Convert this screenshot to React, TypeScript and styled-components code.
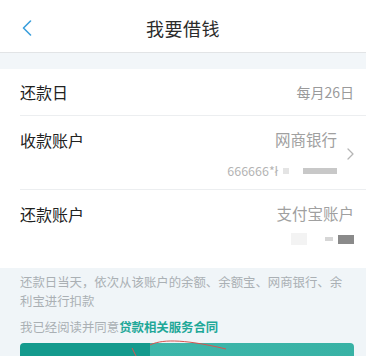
import React from "react";
import styled, { createGlobalStyle } from "styled-components";

const Global = createGlobalStyle`
  html, body { margin: 0; padding: 0; background: #fff; }
  body { font-family: "Noto Sans CJK SC", "Noto Sans", sans-serif; }
  * { box-sizing: border-box; }
`;

const Page = styled.div`
  width: 366px;
  height: 356px;
  overflow: hidden;
  position: relative;
  background: #fff;
`;

const NavBar = styled.div`
  height: 53px;
  display: grid;
  grid-template-columns: 60px 1fr 60px;
  align-items: center;
  border-bottom: 1px solid #e2e4e6;
  background: #fff;
`;

const Back = styled.div`
  display: flex;
  align-items: center;
  padding-left: 22px;
  padding-top: 4px;
`;

const Title = styled.div`
  text-align: center;
  font-size: 18px;
  color: #2b2b2b;
  letter-spacing: 0.5px;
  padding-top: 4px;
`;

const Band = styled.div`
  height: 16px;
  background: #f2f6f9;
`;

const Section = styled.div`
  background: #fff;
`;

const Row = styled.div<{ $h: number; $last?: boolean }>`
  height: ${(p) => p.$h}px;
  margin-left: 20px;
  padding-right: 12px;
  display: flex;
  align-items: flex-start;
  justify-content: space-between;
  border-bottom: ${(p) => (p.$last ? "none" : "1px solid #eceef0")};
`;

const Label = styled.div<{ $top: number }>`
  font-size: 16px;
  color: #222;
  margin-top: ${(p) => p.$top}px;
  line-height: 22px;
`;

const ValueCol = styled.div<{ $top: number }>`
  display: flex;
  flex-direction: column;
  align-items: flex-end;
  margin-top: ${(p) => p.$top}px;
`;

const SmallValue = styled.div`
  font-size: 14px;
  color: #9a9a9a;
  line-height: 20px;
`;

const Value = styled.div`
  font-size: 15.5px;
  color: #a0a0a0;
  line-height: 22px;
`;

const ValueWithArrow = styled.div`
  display: flex;
  align-items: flex-start;
  align-self: stretch;
  gap: 10px;
`;

const ArrowBox = styled.div`
  align-self: center;
  display: flex;
  padding-top: 2px;
`;

const Sub = styled.div<{ $top: number }>`
  display: flex;
  align-items: center;
  gap: 5px;
  font-size: 12.5px;
  color: #b4b4b4;
  margin-top: ${(p) => p.$top}px;
  line-height: 16px;
`;

const Blur = styled.span<{ $w: number; $h: number; $c: string }>`
  display: inline-block;
  width: ${(p) => p.$w}px;
  height: ${(p) => p.$h}px;
  background: ${(p) => p.$c};
  filter: blur(0.6px);
`;

const Notice = styled.div`
  background: #f0f5f8;
  padding: 5px 12px 0 20px;
  height: 100%;
`;

const NoticeText = styled.div`
  font-size: 12.4px;
  line-height: 19px;
  color: #aab0b4;
`;

const Agree = styled.div`
  font-size: 12.4px;
  line-height: 19px;
  color: #aab0b4;
  margin-top: 7px;
`;

const Link = styled.span`
  color: #1fa898;
  font-weight: 600;
`;

const Button = styled.div`
  margin-top: 6px;
  height: 40px;
  border-radius: 4px;
  background: linear-gradient(90deg, #149a8d 0, #149a8d 130px, #3db6aa 130px, #38b2a5 100%);
`;

const Annotation = styled.svg`
  position: absolute;
  left: 0;
  top: 330px;
  pointer-events: none;
`;

const Chevron = () => (
  <svg width="10" height="16" viewBox="0 0 10 16">
    <path d="M8.5 1 L1.5 8 L8.5 15" fill="none" stroke="#3a9fdc" strokeWidth="1.6" strokeLinecap="round" strokeLinejoin="round" />
  </svg>
);

const RightArrow = () => (
  <svg width="7" height="12" viewBox="0 0 7 12">
    <path d="M1 1 L6 6 L1 11" fill="none" stroke="#b5b5b5" strokeWidth="1.3" strokeLinecap="round" strokeLinejoin="round" />
  </svg>
);

export default function App() {
  return (
    <>
      <Global />
      <Page>
        <NavBar>
          <Back>
            <Chevron />
          </Back>
          <Title>我要借钱</Title>
          <div />
        </NavBar>
        <Band />
        <Section>
          <Row $h={47}>
            <Label $top={12}>还款日</Label>
            <ValueCol $top={13}>
              <SmallValue>每月26日</SmallValue>
            </ValueCol>
          </Row>
          <Row $h={74}>
            <Label $top={13}>收款账户</Label>
            <ValueWithArrow>
              <ValueCol $top={12}>
                <Value>网商银行</Value>
                <Sub $top={13}>
                  <span>666666*ł</span>
                  <Blur $w={6} $h={6} $c="#e4e4e4" />
                  <Blur $w={4} $h={4} $c="#ffffff" />
                  <Blur $w={34} $h={6} $c="#c8c8c8" />
                </Sub>
              </ValueCol>
              <ArrowBox>
                <RightArrow />
              </ArrowBox>
            </ValueWithArrow>
          </Row>
          <Row $h={78} $last>
            <Label $top={13}>还款账户</Label>
            <ValueCol $top={12}>
              <Value>支付宝账户</Value>
              <Sub $top={9}>
                <Blur $w={16} $h={12} $c="#f3f3f3" />
                <Blur $w={8} $h={3} $c="#ffffff" />
                <Blur $w={8} $h={4} $c="#d6d6d6" />
                <Blur $w={16} $h={9} $c="#8a8a8a" />
              </Sub>
            </ValueCol>
          </Row>
        </Section>
        <Notice>
          <NoticeText>
            还款日当天，依次从该账户的余额、余额宝、网商银行、余利宝进行扣款
          </NoticeText>
          <Agree>
            我已经阅读并同意<Link>贷款相关服务合同</Link>
          </Agree>
          <Button />
        </Notice>
        <Annotation width="366" height="26" viewBox="0 0 366 26">
          <path d="M150 15 C160 10, 180 8, 226 19" fill="none" stroke="#d9534f" strokeWidth="1" />
          <path d="M132 18 L136 26" fill="none" stroke="#d9534f" strokeWidth="1" />
        </Annotation>
      </Page>
    </>
  );
}
